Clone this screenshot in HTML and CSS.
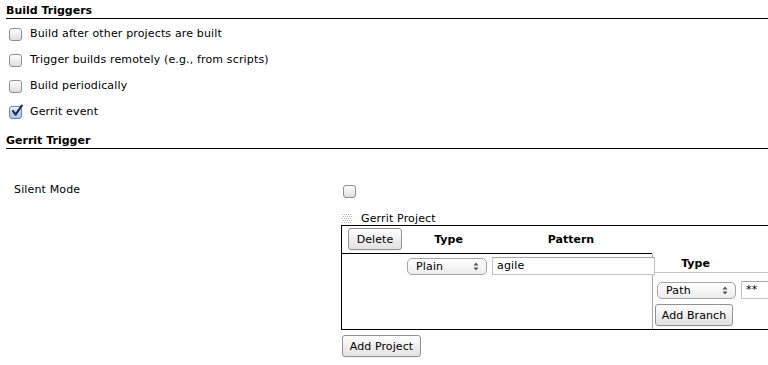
FILE: index.html
```html
<!DOCTYPE html>
<html>
<head>
<meta charset="utf-8">
<link rel="stylesheet" href="styles.css">
</head>
<body>
<div class="page">
  <div class="section-header first">Build Triggers</div>
  <div class="opts">
    <div class="opt"><span class="cb"></span><span class="opt-label">Build after other projects are built</span></div>
    <div class="opt"><span class="cb"></span><span class="opt-label">Trigger builds remotely (e.g., from scripts)</span></div>
    <div class="opt"><span class="cb"></span><span class="opt-label">Build periodically</span></div>
    <div class="opt"><span class="cb checked"><svg class="tick" width="14" height="14" viewBox="0 0 14 14"><path d="M3 7.2 L5.6 10.6 L11.8 1.6" fill="none" stroke="#1d2f5c" stroke-width="2.2" stroke-linecap="round" stroke-linejoin="round"/></svg></span><span class="opt-label">Gerrit event</span></div>
  </div>

  <div class="section-header second">Gerrit Trigger</div>

  <div class="setting">
    <div class="setting-label">Silent Mode</div>
    <div class="setting-field"><span class="cb"></span></div>
  </div>

  <div class="repeat">
    <div class="repeat-title">
      <svg class="grip" width="11" height="10" viewBox="0 0 11 10"><g fill="#b8b8b8"><rect x="0" y="0" width="1" height="1"/><rect x="2" y="0" width="1" height="1"/><rect x="4" y="0" width="1" height="1"/><rect x="6" y="0" width="1" height="1"/><rect x="8" y="0" width="1" height="1"/><rect x="1" y="2" width="1" height="1"/><rect x="3" y="2" width="1" height="1"/><rect x="5" y="2" width="1" height="1"/><rect x="7" y="2" width="1" height="1"/><rect x="9" y="2" width="1" height="1"/><rect x="0" y="4" width="1" height="1"/><rect x="2" y="4" width="1" height="1"/><rect x="4" y="4" width="1" height="1"/><rect x="6" y="4" width="1" height="1"/><rect x="8" y="4" width="1" height="1"/><rect x="1" y="6" width="1" height="1"/><rect x="3" y="6" width="1" height="1"/><rect x="5" y="6" width="1" height="1"/><rect x="7" y="6" width="1" height="1"/><rect x="9" y="6" width="1" height="1"/><rect x="0" y="8" width="1" height="1"/><rect x="2" y="8" width="1" height="1"/><rect x="4" y="8" width="1" height="1"/><rect x="6" y="8" width="1" height="1"/><rect x="8" y="8" width="1" height="1"/></g></svg>
      <span>Gerrit Project</span>
    </div>
    <div class="project-box">
      <div class="proj-head">
        <div class="c1"><button class="btn btn-delete">Delete</button></div>
        <div class="c2 th">Type</div>
        <div class="c3 th">Pattern</div>
      </div>
      <div class="proj-body">
        <div class="c1"></div>
        <div class="c2"><div class="select sel-plain"><span>Plain</span><svg class="arrows" width="6" height="9" viewBox="0 0 6 9"><path d="M3 0.5 L5.5 3.5 L0.5 3.5 Z M3 8.5 L5.5 5.5 L0.5 5.5 Z" fill="#555"/></svg></div></div>
        <div class="c3"><div class="text-input inp-agile">agile</div></div>
        <div class="branches">
          <div class="br-head"><div class="bc1 th">Type</div></div>
          <div class="br-row">
            <div class="bc1"><div class="select sel-path"><span>Path</span><svg class="arrows" width="6" height="9" viewBox="0 0 6 9"><path d="M3 0.5 L5.5 3.5 L0.5 3.5 Z M3 8.5 L5.5 5.5 L0.5 5.5 Z" fill="#555"/></svg></div></div>
            <div class="bc2"><div class="text-input inp-branch">**</div></div>
          </div>
          <div class="br-actions"><button class="btn btn-branch">Add Branch</button></div>
        </div>
      </div>
    </div>
    <button class="btn btn-project">Add Project</button>
  </div>
</div>
</body>
</html>
```
FILE: styles.css
```css
html, body {
  margin: 0;
  padding: 0;
  background: #fff;
  overflow: hidden;
}
body {
  font-family: "DejaVu Sans", Verdana, sans-serif;
  font-size: 11px;
  letter-spacing: 0.15px;
  color: #000;
  width: 768px;
  height: 365px;
}
.page {
  width: 768px;
}
.section-header {
  margin-left: 6px;
  font-weight: bold;
  letter-spacing: 0;
  line-height: 14px;
  border-bottom: 1px solid #000;
}
.section-header.first {
  padding-top: 4px;
}
.section-header.second {
  padding-top: 9px;
}
.opts {
  margin-top: 2px;
}
.opt {
  height: 26px;
  display: flex;
  align-items: center;
  padding-left: 9px;
}
.cb {
  position: relative;
  display: block;
  width: 11px;
  height: 11px;
  border: 1px solid #8f8f8f;
  border-radius: 3px;
  background: linear-gradient(#ffffff, #dedede);
  box-shadow: inset 0 1px 0 #fff;
  flex: none;
}
.cb.checked {
  background: linear-gradient(#dbe9f7, #a9c6e8);
  border-color: #6a86ad;
}
.tick {
  position: absolute;
  left: 0;
  top: -3px;
}
.opt-label {
  margin-left: 8px;
  line-height: 14px;
  white-space: nowrap;
}
.setting {
  display: grid;
  grid-template-columns: 343px 1fr;
}
.setting-label {
  padding-left: 14px;
  padding-top: 34px;
  line-height: 14px;
}
.setting-field {
  display: flex;
  padding-top: 36px;
}
.repeat {
  margin-left: 341px;
  margin-top: 14px;
}
.repeat-title {
  display: flex;
  align-items: center;
  height: 14px;
  line-height: 14px;
  white-space: nowrap;
}
.grip {
  margin-left: 1px;
  margin-right: 8px;
}
.project-box {
  width: 520px;
  height: 105px;
  border: 1px solid #000;
  margin-top: -1px;
  box-sizing: border-box;
}
.proj-head {
  display: flex;
  width: 310px;
  height: 27px;
  border-bottom: 1px solid #000;
  align-items: center;
}
.th {
  font-weight: bold;
  letter-spacing: 0;
  text-align: center;
}
.c1 { width: 65px; flex: none; }
.c2 { width: 83px; flex: none; }
.c3 { width: 162px; flex: none; }
.proj-head .c1 {
  padding-left: 6px;
  box-sizing: border-box;
  align-self: flex-start;
  padding-top: 2px;
}
.proj-body {
  display: flex;
  height: 75px;
}
.proj-body .c2 { padding-top: 4px; }
.proj-body .c3 { padding-top: 3px; padding-left: 2px; box-sizing: border-box; }
.btn {
  font-family: "DejaVu Sans", Verdana, sans-serif;
  font-size: 11px;
  letter-spacing: 0.1px;
  color: #000;
  height: 22px;
  padding: 0;
  white-space: nowrap;
  border: 1px solid #929292;
  border-radius: 3px;
  background: linear-gradient(#ffffff, #ececec 60%, #e2e2e2);
  box-shadow: 0 1px 0 rgba(0,0,0,0.05);
  display: flex;
  align-items: center;
  justify-content: center;
}
.btn-delete { width: 54px; }
.btn-project { width: 79px; margin-top: 5px; margin-left: 1px; }
.btn-branch { width: 78px; }
.select {
  display: flex;
  align-items: center;
  justify-content: space-between;
  height: 17px;
  box-sizing: border-box;
  border: 1px solid #a5a5a5;
  border-radius: 5px;
  background: linear-gradient(#ffffff, #ededed);
  padding: 0 7px 0 8px;
  white-space: nowrap;
}
.sel-plain { width: 80px; }
.sel-path { width: 79px; }
.text-input {
  height: 18px;
  box-sizing: border-box;
  border: 1px solid #c3c3c3;
  border-top-color: #a8a8a8;
  padding-left: 4px;
  line-height: 16px;
  background: #fff;
  white-space: nowrap;
}
.inp-agile {
  width: 163px;
  position: relative;
  z-index: 1;
}
.branches {
  flex: 1;
  border-left: 1px solid #a8a8a8;
  display: flex;
  flex-direction: column;
}
.br-head {
  height: 18px;
  border-bottom: 1px solid #c8c8c8;
  display: flex;
  align-items: center;
}
.bc1 { width: 85px; flex: none; }
.br-row {
  display: flex;
  padding-top: 9px;
}
.br-row .bc1 { padding-left: 4px; box-sizing: border-box; }
.br-row .bc2 { padding-left: 3px; }
.inp-branch { width: 60px; margin-top: -1px; }
.br-actions {
  padding-left: 2px;
  padding-top: 5px;
}
```
